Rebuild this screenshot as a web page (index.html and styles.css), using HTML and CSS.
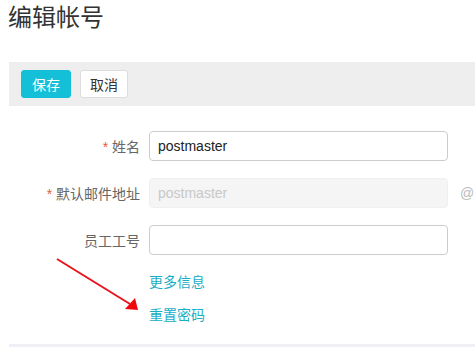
FILE: index.html
```html
<!DOCTYPE html>
<html lang="zh-CN">
<head>
  <meta charset="UTF-8">
  <title>编辑帐号</title>
  <link rel="stylesheet" href="styles.css">
</head>
<body>
  <div class="page">
    <h1 class="title">编辑帐号</h1>

    <div class="toolbar">
      <button class="btn btn-primary">保存</button>
      <button class="btn">取消</button>
    </div>

    <div class="form">
      <div class="row">
        <label class="label"><span class="req">*</span> 姓名</label>
        <input class="input" type="text" value="postmaster">
      </div>
      <div class="row">
        <label class="label"><span class="req">*</span> 默认邮件地址</label>
        <input class="input" type="text" value="postmaster" disabled>
        <span class="domain">@</span>
      </div>
      <div class="row">
        <label class="label">员工工号</label>
        <input class="input" type="text" value="">
      </div>
      <div class="links">
        <a href="#">更多信息</a>
        <a href="#">重置密码</a>
      </div>
    </div>

    <div class="footer"></div>
  </div>

  <!-- 标注箭头 -->
  <svg class="arrow" width="100" height="70" viewBox="0 0 100 70">
    <line x1="7" y1="9" x2="80" y2="54" stroke="#e8141c" stroke-width="2"/>
    <polygon points="88,60 75,59 85,48" fill="#f0080f"/>
  </svg>
</body>
</html>
```

FILE: styles.css
```css
* {
  margin: 0;
  padding: 0;
  box-sizing: border-box;
}

body {
  font-family: "Liberation Sans", "Noto Sans CJK SC", sans-serif;
  font-size: 14px;
  color: #333;
  background: #fff;
  overflow: hidden;
}

.page {
  padding-left: 9px;
}

.title {
  font-size: 24px;
  font-weight: normal;
  color: #333;
  height: 62px;
  line-height: 36px;
  margin-left: -1px;
}

.toolbar {
  background: #eee;
  height: 44px;
  padding: 8px 12px;
  display: flex;
  gap: 9px;
}

.btn {
  font-family: inherit;
  font-size: 14px;
  height: 28px;
  width: 48px;
  white-space: nowrap;
  border: 1px solid #ddd;
  border-radius: 3px;
  background: #fff;
  color: #333;
}

.btn-primary {
  background: #14bfd8;
  border-color: #14bfd8;
  color: #fff;
  width: 50px;
}

.form {
  padding-top: 25px;
}

.row {
  display: flex;
  align-items: center;
  gap: 9px;
  margin-bottom: 17px;
  white-space: nowrap;
}

.label {
  flex: 0 0 131px;
  text-align: right;
  color: #666;
}

.req {
  color: #e35a3e;
}

.input {
  flex: 0 0 299px;
  height: 30px;
  border: 1px solid #ccc;
  border-radius: 4px;
  padding: 0 8px;
  font-family: inherit;
  font-size: 14px;
  color: #222;
  background: #fff;
}

.input:disabled {
  background: #f5f5f5;
  border-color: #f0f0f0;
  color: #c8c8c8;
}

.domain {
  color: #bbb;
  margin-left: 3px;
}

.links {
  padding-left: 140px;
  display: flex;
  flex-direction: column;
  gap: 13px;
}

.links a {
  color: #1aaec6;
  text-decoration: none;
  line-height: 20px;
}

.footer {
  margin-top: 19px;
  height: 10px;
  background: #efeff5;
}

.arrow {
  position: absolute;
  left: 50px;
  top: 250px;
}
```
